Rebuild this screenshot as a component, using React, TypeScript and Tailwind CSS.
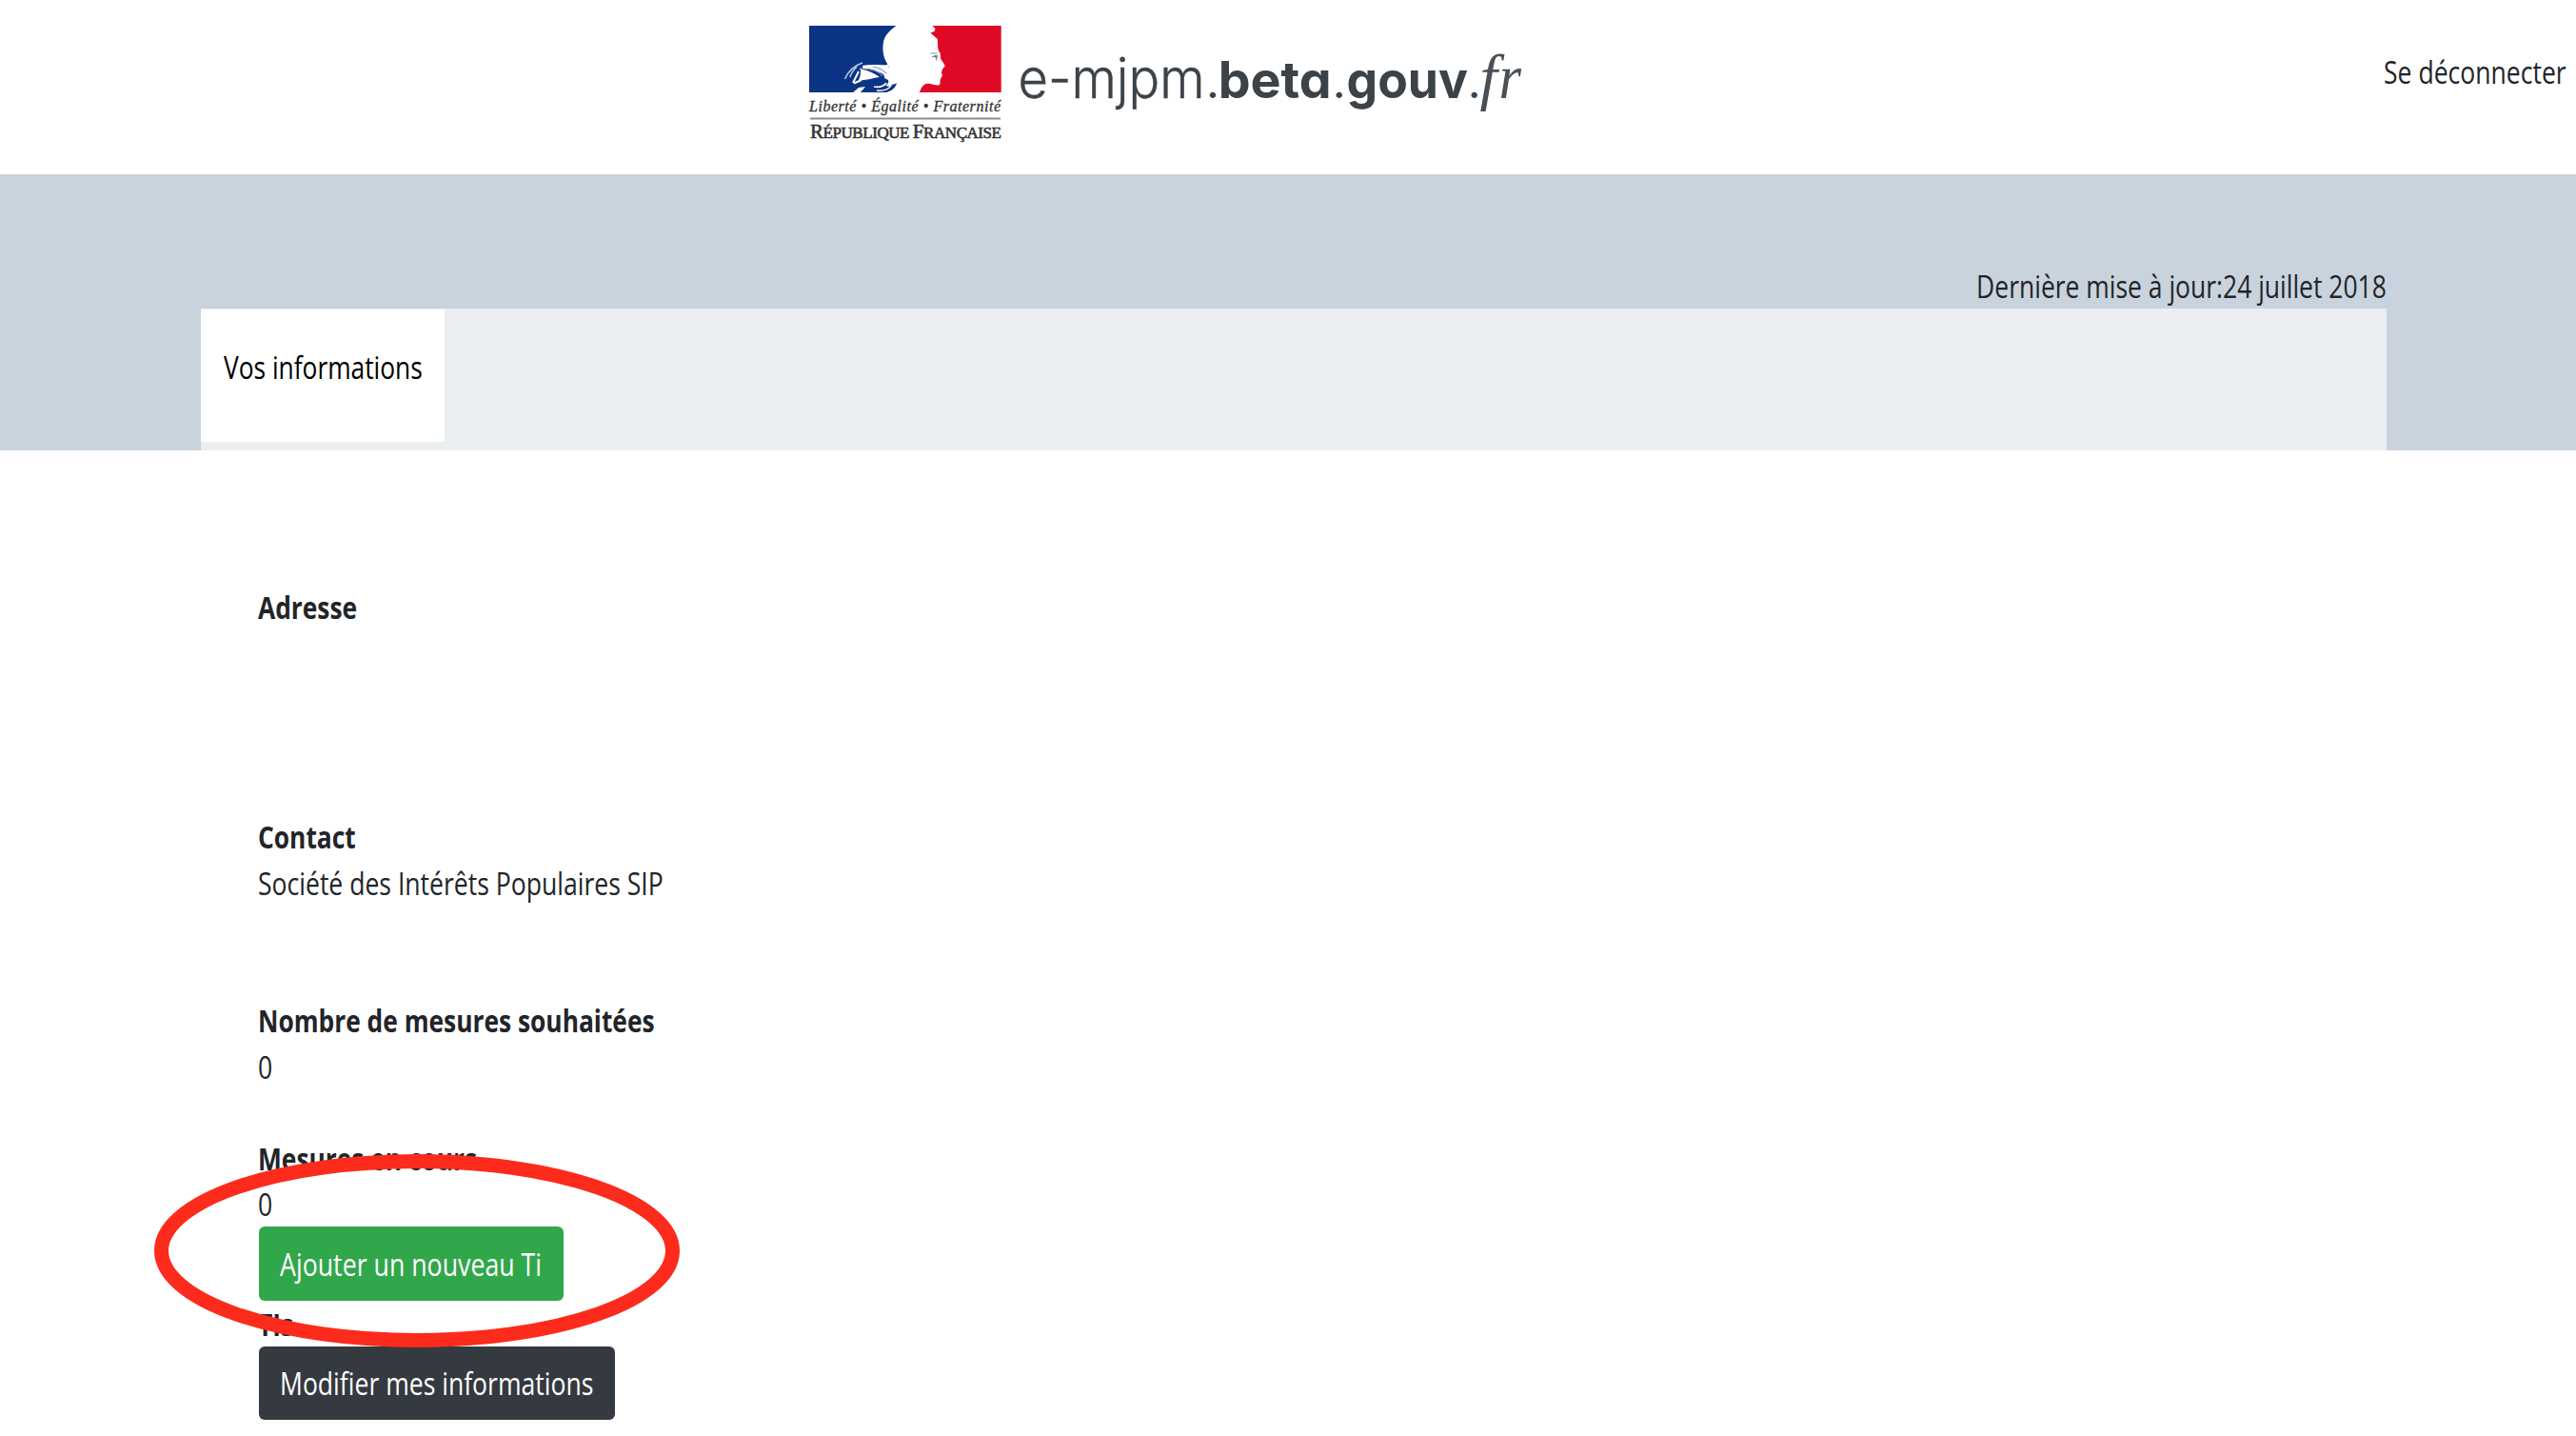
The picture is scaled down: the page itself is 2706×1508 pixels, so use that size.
import type { ReactNode } from "react";

function Text({ children, scale = "scale-x-[0.83]", className = "" }: { children: ReactNode; scale?: string; className?: string }) {
  return (
    <span className={`relative top-px inline-block origin-left whitespace-nowrap ${scale} ${className}`}>{children}</span>
  );
}

const BOLD = "scale-x-[0.823]";
const BUTTON = "scale-x-[0.835]";

function Marianne() {
  return (
    <svg className="block h-[135px] w-[215px] shrink-0" viewBox="0 0 215 135">
      <path
        fill="#0b3484"
        d="M5 7H96.5C91 11 86 15 83.500 22C81.500 30 82.500 38 85.500 44L88.500 50L87 58L97 67.500C94 72 91 75 86 77H5Z"
      />
      <path fill="#fff" d="M61 49C70 47 80 49 88 48L90 60L84 62C86 57 76 54 61 52Z" />
      <path fill="#fff" d="M58 51L61 53C67 54 74 57 79 61C71 62 64 65 57 64C59 59 60 55 58 51Z" />
      <path fill="none" stroke="#b9c6e2" strokeWidth="1.600" d="M61 46C52 49 46 55 42.500 63M55 50C51 54 49 57 48 61" />
      <path fill="none" stroke="#fff" strokeWidth="2" d="M57 55L51 67M60 64L52 67.500" />
      <path fill="none" stroke="#7f96c6" strokeWidth="1.200" d="M63 52C72 52 78 55 82 60M72 50C78 51 82 53 86 57" />
      <path fill="#fff" d="M50 78L57 72L64 71L58 78Z" />
      <path fill="#fff" d="M84 62L91 57L98 67L90 71L85 70C88 68 89 66 88 64Z" />
      <path fill="none" stroke="#fff" strokeWidth="1.600" d="M86 67C83 71 78 72 73 71M94 67C91 73 84 76 76 75" />
      <path fill="#0b3484" d="M97 67.500C95 73 91 76 85 77H79C88 75 91 72 92 69Z" />
      <path
        fill="#e10a26"
        d="M134.300 7H206.700V77H120.800C123 72 125 68.500 128 68C132 67 137 70 141 69.500C143.500 69 142 65 143 63L145 59L144 56.500L144.700 53L147.700 49.500C147 46 144 44 143.300 42L142.700 36C139 31 140.500 26 139.800 21L136.500 18L132.300 14.500L136.500 13L137.500 10Z"
      />
      <path fill="none" stroke="#8d8d8d" strokeWidth="1.200" d="M132.500 36H139.500M134 39.500H139L138.500 43.500" />
      <path fill="#777" d="M136 38H140L138.500 42Z" />
      <text x="5" y="97" textLength="201" fontSize="16" fill="#333" stroke="#333" strokeWidth="0.300" fontStyle="italic" fontFamily="Liberation Serif, serif">
        Liberté • Égalité • Fraternité
      </text>
      <path stroke="#8c8c8c" strokeWidth="1.800" d="M6 104.500H206" />
      <text x="6" y="125" textLength="201" fontSize="17" fill="#333" stroke="#333" strokeWidth="0.600" fontFamily="Liberation Serif, serif">
        <tspan fontSize="21">R</tspan>ÉPUBLIQUE <tspan fontSize="21">F</tspan>RANÇAISE
      </text>
    </svg>
  );
}

function Wordmark() {
  return (
    <svg
      className="block h-[135px] w-[545px] shrink-0 [font-feature-settings:'cv11']"
      viewBox="1060 20 545 135"
      fill="#3b4248"
    >
      <text y="102.700" fontFamily="Inter, sans-serif" fontSize="54" fontWeight="700">
        <tspan x="1069.500" fontSize="58" fontWeight="300" stroke="#3b4248" strokeWidth="0.400" textLength="196" lengthAdjust="spacingAndGlyphs">e-mjpm</tspan>
        <tspan x="1267.300" fontSize="44" fontWeight="500">.</tspan>
        <tspan x="1279.700" textLength="119" lengthAdjust="spacingAndGlyphs">beta</tspan>
        <tspan x="1400" fontSize="44" fontWeight="500">.</tspan>
        <tspan x="1414.500" textLength="127.500" lengthAdjust="spacingAndGlyphs">gouv</tspan>
        <tspan x="1542" fontSize="44" fontWeight="500">.</tspan>
        <tspan x="1554.500" fontFamily="Liberation Serif, serif" fontSize="66" fontWeight="400" fontStyle="italic" fill="#4a5055">f</tspan>
        <tspan x="1574.500" fontFamily="Liberation Serif, serif" fontSize="66" fontWeight="400" fontStyle="italic" fill="#4a5055" textLength="23.500" lengthAdjust="spacingAndGlyphs">r</tspan>
      </text>
    </svg>
  );
}

export default function App() {
  return (
    <div className="h-[1508px] w-[2706px] overflow-hidden bg-white font-['Open_Sans',sans-serif] text-[32px] leading-[48.250px] text-[#212529]">
      <header className="flex h-[183px] items-start justify-between pl-[845px] pt-5">
        <div className="flex">
          <Marianne />
          <Wordmark />
        </div>
        <a className="mt-[31px] w-[202.500px]">
          <Text>Se déconnecter</Text>
        </a>
      </header>

      <section className="flex h-[289.500px] flex-col bg-[#c9d3dd] pl-[211px] pr-[199px] pt-[93px]">
        <div className="flex h-[47.500px] justify-end">
          <Text className="origin-right" scale="scale-x-[0.827]">Dernière mise à jour:24 juillet 2018</Text>
        </div>
        <nav className="flex flex-1 items-start bg-[#eaeef1] pt-[1.500px]">
          <a className="h-[138.500px] w-[256px] bg-white pl-[23.500px] pt-[36px] text-black">
            <Text scale={BOLD}>Vos informations</Text>
          </a>
        </nav>
      </section>

      <main className="relative pl-[271px] pt-[140.500px]">
        <div className="h-[241.300px] font-bold"><Text scale={BOLD}>Adresse</Text></div>
        <div className="h-[193px]">
          <div className="font-bold"><Text scale={BOLD}>Contact</Text></div>
          <div><Text>Société des Intérêts Populaires SIP</Text></div>
        </div>
        <div className="h-[144.750px]">
          <div className="font-bold"><Text scale={BOLD}>Nombre de mesures souhaitées</Text></div>
          <div><Text>0</Text></div>
        </div>
        <div className="font-bold"><Text scale={BOLD}>Mesures en cours</Text></div>
        <div><Text>0</Text></div>
        <button className="ml-[0.750px] mt-[-0.500px] flex h-[78px] w-[320px] items-center rounded-[6px] bg-[#31a74b] pl-[22.500px] text-white">
          <Text scale={BUTTON}>Ajouter un nouveau Ti</Text>
        </button>
        <div className="font-bold"><Text scale={BOLD}>TIs</Text></div>
        <button className="ml-[0.750px] flex h-[76.500px] w-[374.500px] items-center rounded-[6px] bg-[#353940] pl-[22.500px] text-white">
          <Text>Modifier mes informations</Text>
        </button>
        <div className="absolute left-[162px] top-[739.500px] h-[203px] w-[552px]">
          <svg className="block size-full overflow-visible" viewBox="0 0 552 203">
            <ellipse cx="276" cy="101.500" rx="268.500" ry="94" fill="none" stroke="#fc2b1c" strokeWidth="15" />
          </svg>
        </div>
      </main>
    </div>
  );
}
